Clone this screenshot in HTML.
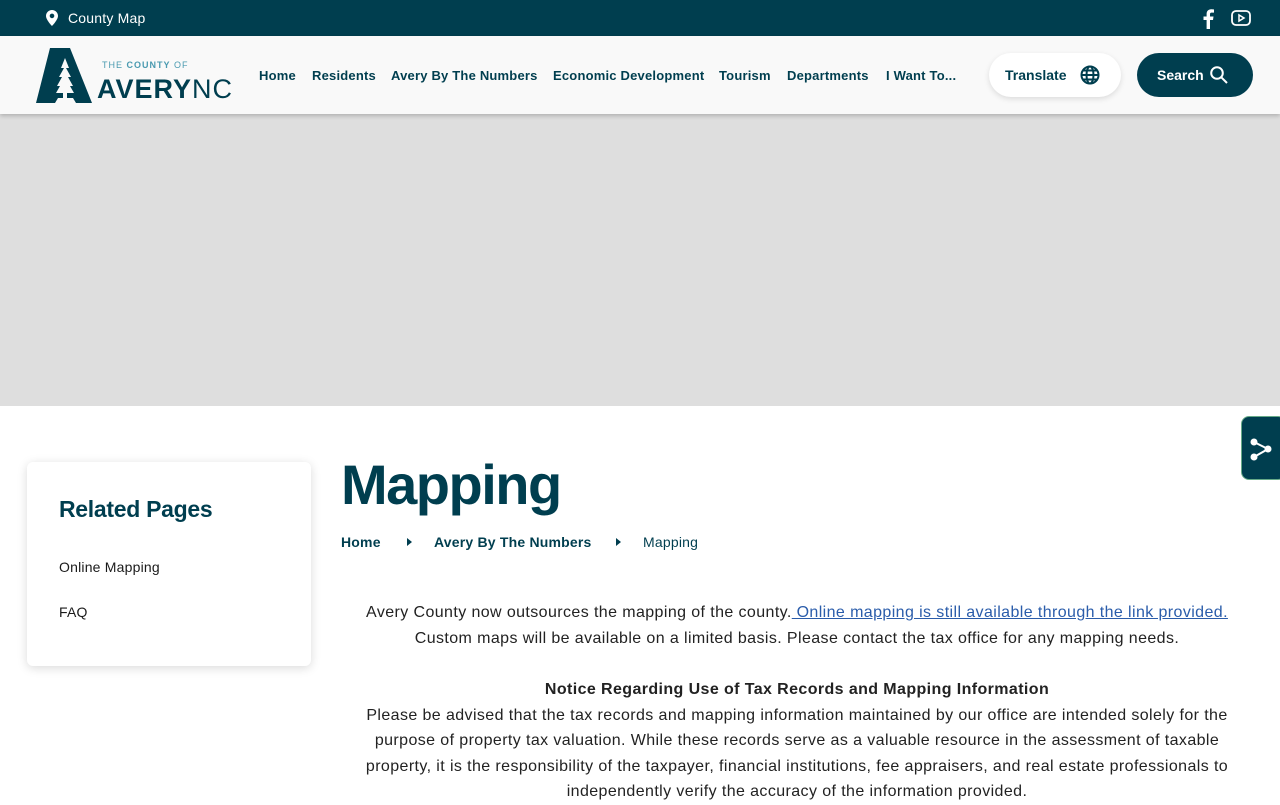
<!DOCTYPE html>
<html><head><meta charset="utf-8"><style>
*{box-sizing:border-box;margin:0;padding:0}
body{width:1280px;height:800px;overflow:hidden;background:#fff;font-family:"Liberation Sans",sans-serif;color:#1a1a1a;position:relative}
.top{height:36px;background:#003e4f;color:#fff;position:relative}
.top .cm{position:absolute;left:46px;top:10px;font-size:14px;display:flex;align-items:center;gap:10px;letter-spacing:.2px}
.hdr{height:78px;background:#f9f9f9;position:relative;box-shadow:0 2px 4px rgba(0,0,0,.2);z-index:2}
.nav span{position:absolute;top:32px;font-size:13px;font-weight:bold;color:#003e4f;letter-spacing:.2px;white-space:nowrap}
.btn{position:absolute;border-radius:22px;font-weight:bold;font-size:14px;display:flex;align-items:center}
.hero{height:292px;background:#dedede}
.side{position:absolute;left:27px;top:462px;width:284px;height:204px;background:#fff;border-radius:6px;box-shadow:0 2px 10px rgba(0,0,0,.15)}
.side h3{position:absolute;left:32px;top:34px;font-size:23px;color:#003e4f;font-weight:bold;letter-spacing:-.3px}
.side a{position:absolute;left:32px;font-size:14px;color:#1a1a1a;letter-spacing:.2px}
h1{position:absolute;left:341px;top:452px;font-size:56px;color:#003e4f;font-weight:bold;letter-spacing:-1.5px}
.bc{position:absolute;top:534px;font-size:14px;color:#003e4f;letter-spacing:.2px}
.txt{position:absolute;left:297px;width:1000px;text-align:center;font-size:16px;line-height:25.5px;color:#222;letter-spacing:.4px;white-space:nowrap}
.share{position:absolute;left:1241px;top:416px;width:45px;height:64px;background:#003e4f;border-radius:8px;border:1px solid #6a8}
</style></head><body>
<div class="top">
 <div class="cm"><svg width="12" height="16" viewBox="0 0 12 16"><path d="M6 0C2.7 0 0 2.6 0 5.9 0 10 6 16 6 16s6-6 6-10.1C12 2.6 9.3 0 6 0zm0 8.2a2.3 2.3 0 110-4.6 2.3 2.3 0 010 4.6z" fill="#fff"/></svg>County Map</div>
 <svg style="position:absolute;left:1202px;top:9px" width="12" height="20" viewBox="0 0 12 20"><path d="M8 20V11h3l.5-3.5H8V5.3C8 4.3 8.3 3.6 9.8 3.6H12V.5C11.5.4 10.4.3 9.2.3 6.5.3 4.6 2 4.6 5v2.5H1.5V11h3.1v9z" fill="#fff"/></svg>
 <svg style="position:absolute;left:1231px;top:10px" width="20" height="16" viewBox="0 0 20 16"><rect x="1" y="1" width="18" height="14" rx="4" fill="none" stroke="#fff" stroke-width="1.8"/><path d="M8 5v6l5-3z" fill="none" stroke="#fff" stroke-width="1.5"/></svg>
</div>
<div class="hdr">
 <svg style="position:absolute;left:36px;top:12px" width="60" height="56" viewBox="0 0 60 56"><path d="M14 0h20l22 55H40l-3-5H22l-3 5H0z" fill="#003e4f"/><path d="M29 10l-4 10h3l-5 9h3l-5 9h3l-4 7h7v5h4v-5h7l-4-7h3l-5-9h3l-5-9h3z" fill="#f9f9f9"/></svg>
 <div style="position:absolute;left:102px;top:25px;font-size:9px;line-height:9px;color:#4a9ab0;letter-spacing:1px">THE <b>COUNTY</b> OF</div>
 <div style="position:absolute;left:97px;top:40px;font-size:27px;line-height:27px;color:#003e4f;letter-spacing:1px"><b>AVERY</b>NC</div>
 <div class="nav"><span style="left:259px">Home</span><span style="left:312px">Residents</span><span style="left:391px">Avery By The Numbers</span><span style="left:553px">Economic Development</span><span style="left:719px">Tourism</span><span style="left:787px">Departments</span><span style="left:886px">I Want To...</span></div>
 <div class="btn" style="left:989px;top:17px;width:132px;height:44px;background:#fff;color:#003e4f;padding-left:16px;box-shadow:0 2px 6px rgba(0,0,0,.12)">Translate
  <svg style="margin-left:14px" width="20" height="20" viewBox="0 0 20 20" fill="none" stroke="#003e4f" stroke-width="2"><circle cx="10" cy="10" r="8.5"/><ellipse cx="10" cy="10" rx="3.5" ry="8.5"/><path d="M1.5 10h17M3 5.5h14M3 14.5h14"/></svg></div>
 <div class="btn" style="left:1137px;top:17px;width:116px;height:44px;background:#003e4f;color:#fff;padding-left:20px">Search
  <svg style="margin-left:6px" width="18" height="18" viewBox="0 0 18 18" fill="none" stroke="#fff" stroke-width="2"><circle cx="7" cy="7" r="5.8"/><path d="M11.3 11.3L17 17"/></svg></div>
</div>
<div class="hero"></div>
<div class="side"><h3>Related Pages</h3><a style="top:97px">Online Mapping</a><a style="top:142px">FAQ</a></div>
<h1>Mapping</h1>
<div class="bc" style="left:341px;font-weight:bold">Home</div>
<svg style="position:absolute;left:407px;top:538px" width="5" height="8"><path d="M0 0l5 4-5 4z" fill="#003e4f"/></svg>
<div class="bc" style="left:434px;font-weight:bold">Avery By The Numbers</div>
<svg style="position:absolute;left:616px;top:538px" width="5" height="8"><path d="M0 0l5 4-5 4z" fill="#003e4f"/></svg>
<div class="bc" style="left:643px">Mapping</div>
<div class="txt" style="top:600px">Avery County now outsources the mapping of the county.<span style="color:#2a5caa;text-decoration:underline"> Online mapping is still available through the link provided.</span><br>Custom maps will be available on a limited basis. Please contact the tax office for any mapping needs.</div>
<div class="txt" style="top:677px"><b>Notice Regarding Use of Tax Records and Mapping Information</b><br>Please be advised that the tax records and mapping information maintained by our office are intended solely for the<br>purpose of property tax valuation. While these records serve as a valuable resource in the assessment of taxable<br>property, it is the responsibility of the taxpayer, financial institutions, fee appraisers, and real estate professionals to<br>independently verify the accuracy of the information provided.</div>
<div class="share"><svg style="position:absolute;left:8px;top:20px" width="22" height="24" viewBox="0 0 22 24"><circle cx="4" cy="5" r="3.5" fill="#fff"/><circle cx="18" cy="12" r="3.5" fill="#fff"/><circle cx="4" cy="20" r="3.5" fill="#fff"/><path d="M4 5l14 7-14 8" fill="none" stroke="#fff" stroke-width="2"/></svg></div>
</body></html>
